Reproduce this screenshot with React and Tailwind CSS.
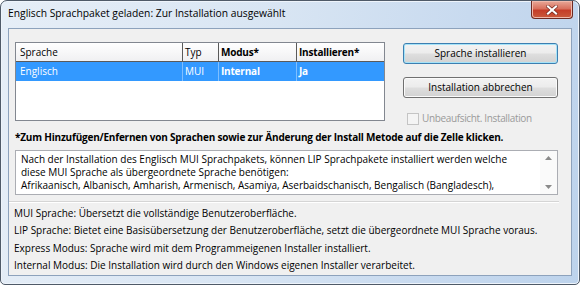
import React from "react";

function Btn({ children, def }) {
  return (
    <div
      className={`h-[21px] w-[155px] rounded-[3px] border ${
        def ? "border-[#3c7fb1] shadow-[inset_0_0_0_1px_#a6e3f8]" : "border-[#707070] shadow-[inset_0_0_0_1px_#fbfbfb]"
      } bg-[linear-gradient(#f3f3f3_0%,#ececec_48%,#dedede_52%,#d2d2d2_100%)] flex items-center justify-center text-[10px] text-black`}
    >
      {children}
    </div>
  );
}

export default function App() {
  return (
    <div className="w-[580px] h-[285px] bg-white font-['Open_Sans',sans-serif] text-[10px] text-black">
      <div className="w-[580px] h-[285px] rounded-t-[7px] rounded-b-[5px] border border-[#4f5a68] bg-[linear-gradient(100deg,#e6eef7_0%,#d8e5f3_45%,#c8daef_75%,#bdd3ec_100%)] flex flex-col shadow-[inset_0_0_0_1px_#eef4fb]">
        {/* title bar */}
        <div className="h-[27px] flex items-start shrink-0">
          <div className="pl-[7px] pt-[5px] text-[10.3px] leading-[15px] text-black">
            Englisch Sprachpaket geladen: Zur Installation ausgewählt
          </div>
          <div className="ml-auto mr-[6px] w-[42px] h-[18px] rounded-b-[4px] border border-t-0 border-[#6e2a22] bg-[linear-gradient(#e8a898_0%,#d8705d_45%,#c53d28_55%,#c95a3c_100%)] flex items-center justify-center shadow-[inset_0_0_0_1px_#f0b9ab]">
            <svg width="12" height="10" viewBox="0 0 12 10">
              <path d="M2 1.5 L10 8.5 M10 1.5 L2 8.5" stroke="#6b2017" strokeWidth="3.4" strokeLinecap="square" />
              <path d="M2 1.5 L10 8.5 M10 1.5 L2 8.5" stroke="#ffffff" strokeWidth="2.2" strokeLinecap="square" />
            </svg>
          </div>
        </div>
        {/* client */}
        <div className="mx-[7px] mb-[9px] flex-1 border border-[#8da2bc] bg-[#f0f0f0] flex flex-col">
          <div className="flex pl-[6px] pt-[13px]">
            {/* grid */}
            <div className="w-[370px] h-[79px] border border-[#828790] bg-white flex flex-col">
              <div className="flex h-[19px] bg-[linear-gradient(#ffffff,#f0f0f2)] border-b border-[#5a5a5a] leading-[18px]">
                <div className="w-[167px] pl-[4px] border-r border-[#5a5a5a]">Sprache</div>
                <div className="w-[36px] pl-[2px] border-r border-[#5a5a5a]">Typ</div>
                <div className="w-[78px] pl-[2px] font-bold tracking-[-0.2px] border-r border-[#5a5a5a]">Modus*</div>
                <div className="w-[87px] pl-[2px] font-bold tracking-[-0.2px]">Installieren*</div>
              </div>
              <div className="flex h-[19px] bg-[#3399ff] text-white leading-[19px]">
                <div className="w-[167px] pl-[4px] border-r border-[#7fbfff]">Englisch</div>
                <div className="w-[36px] pl-[2px] border-r border-[#7fbfff]">MUI</div>
                <div className="w-[78px] pl-[2px] font-bold tracking-[-0.2px] border-r border-[#7fbfff]">Internal</div>
                <div className="w-[87px] pl-[2px] font-bold tracking-[-0.2px]">Ja</div>
              </div>
            </div>
            {/* buttons */}
            <div className="ml-[18px] pt-[1px] flex flex-col">
              <Btn def>Sprache installieren</Btn>
              <div className="h-[13px]" />
              <Btn>Installation abbrechen</Btn>
              <div className="mt-[13px] ml-[4px] flex items-center gap-[3px] text-[#9a9a9a]">
                <div className="w-[12px] h-[12px] border border-[#c4c4c4] bg-[#f4f4f4]" />
                <span className="tracking-[-0.35px]">Unbeaufsicht. Installation</span>
              </div>
            </div>
          </div>
          <div className="pl-[6px] mt-[4px] font-bold tracking-[-0.2px] leading-[14px]">
            *Zum Hinzufügen/Enfernen von Sprachen sowie zur Änderung der Install Metode auf die Zelle klicken.
          </div>
          <div className="ml-[6px] mt-[6px] w-[543px] h-[45px] border border-[#abadb3] bg-white flex">
            <div className="flex-1 pl-[5px] pt-[2px] leading-[13px] overflow-hidden">
              <div>Nach der Installation des Englisch MUI Sprachpakets, können LIP Sprachpakete installiert werden welche</div>
              <div>diese MUI Sprache als übergeordnete Sprache benötigen:</div>
              <div>Afrikaanisch, Albanisch, Amharish, Armenisch, Asamiya, Aserbaidschanisch, Bengalisch (Bangladesch),</div>
            </div>
            <div className="w-[17px] flex flex-col items-center justify-between py-[5px] bg-[#fafafa]">
              <svg width="7" height="4" viewBox="0 0 7 4"><path d="M0 4 L3.5 0 L7 4 Z" fill="#8a8a8a" /></svg>
              <svg width="7" height="4" viewBox="0 0 7 4"><path d="M0 0 L3.5 4 L7 0 Z" fill="#8a8a8a" /></svg>
            </div>
          </div>
          <div className="mt-[6px] mr-[12px] h-[2px] border-t border-[#d5d5d5] border-b border-b-white" />
          <div className="pl-[5px] pt-[2px] leading-[17.4px]">
            <div>MUI Sprache: Übersetzt die vollständige Benutzeroberfläche.</div>
            <div>LIP Sprache: Bietet eine Basisübersetzung der Benutzeroberfläche, setzt die übergeordnete MUI Sprache voraus.</div>
            <div>Express Modus: Sprache wird mit dem Programmeigenen Installer installiert.</div>
            <div>Internal Modus: Die Installation wird durch den Windows eigenen Installer verarbeitet.</div>
          </div>
        </div>
      </div>
    </div>
  );
}
